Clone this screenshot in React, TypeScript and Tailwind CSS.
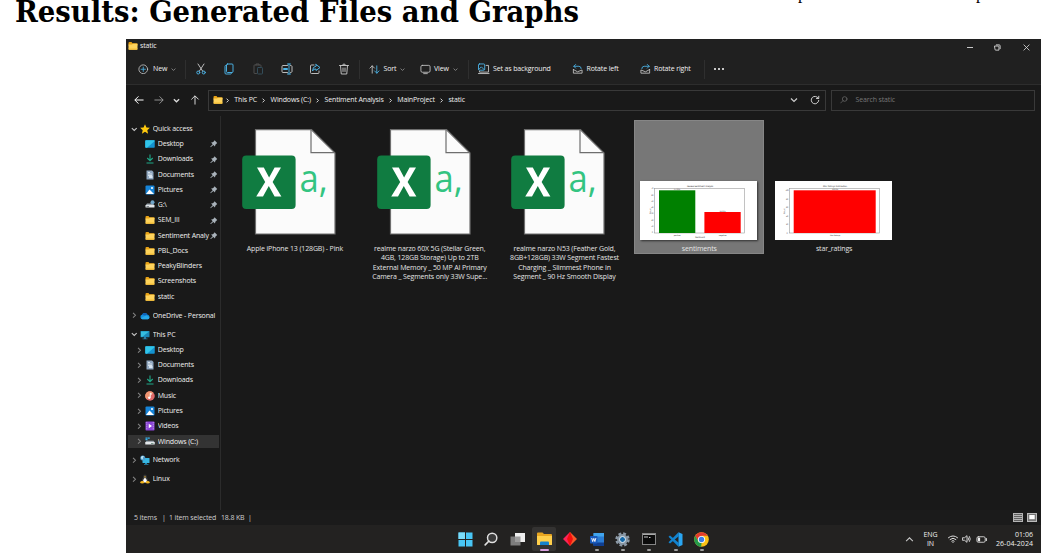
import React from "react";

const B = "#4cb4e8";
const G = "#c4c4c4";

function Ic({ size = 12, children, vb = "0 0 24 24", w }: { size?: number; children: React.ReactNode; vb?: string; w?: number }) {
  return (
    <svg width={w ?? size} height={size} viewBox={vb} fill="none" strokeWidth="1.9" strokeLinecap="round" strokeLinejoin="round" className="block shrink-0">
      {children}
    </svg>
  );
}

function Chev({ dir = "down", size = 6, color = "#a0a0a0", sw = 1.2 }: { dir?: "down" | "right" | "up"; size?: number; color?: string; sw?: number }) {
  const d = dir === "down" ? "M1 2.5 L4 5.5 L7 2.5" : dir === "up" ? "M1 5.5 L4 2.5 L7 5.5" : "M2.5 1 L5.5 4 L2.5 7";
  return (
    <svg width={size} height={size} viewBox="0 0 8 8" fill="none" className="block shrink-0">
      <path d={d} stroke={color} strokeWidth={sw} />
    </svg>
  );
}

function Folder({ size = 10 }: { size?: number }) {
  return (
    <svg width={size} height={size} viewBox="0 0 20 20" className="block shrink-0">
      <path d="M1 4 Q1 2 3 2 H7 L9 4.5 H17 Q19 4.5 19 6 V9 H1Z" fill="#e8a317" />
      <path d="M1 7 H8 L10 5.5 H19 V16 Q19 17.5 17.5 17.5 H2.5 Q1 17.5 1 16Z" fill="#ffd45c" />
      <path d="M1 15 H19 V16 Q19 17.5 17.5 17.5 H2.5 Q1 17.5 1 16Z" fill="#f5bd37" />
    </svg>
  );
}

function SideIcon({ kind }: { kind: string }) {
  if (kind === "folder") return <Folder />;
  return (
    <svg width="10" height="10" viewBox="0 0 20 20" className="block shrink-0">
      {kind === "star" && <path d="M10 .5 L12.9 7 L19.7 7.7 L14.6 12.3 L16.2 19.3 L10 15.6 L3.8 19.3 L5.4 12.3 L.3 7.7 L7.1 7Z" fill="#ffc90e" />}
      {kind === "desktop" && (
        <g>
          <rect x=".5" y="2.5" width="19" height="15" rx="1.5" fill="#1492d0" />
          <path d="M.5 4 Q.5 2.5 2 2.5 H18 Q19.5 2.5 19.5 4 L4 17.5 H2 Q.5 17.5 .5 16Z" fill="#31c4e8" />
        </g>
      )}
      {kind === "downloads" && <path d="M10 1 V13 M4.5 8 L10 13.5 L15.5 8 M3 18 H17" stroke="#1fa888" strokeWidth="2.2" fill="none" />}
      {kind === "documents" && (
        <g>
          <path d="M3 1 H14 L17 4 V19 H3Z" fill="#8fa6be" />
          <path d="M6 5 H10 M6 8 H14 M6 11 H14" stroke="#eef4fa" strokeWidth="1.5" />
          <rect x="8" y="12" width="7" height="4" fill="#d7e3ef" />
        </g>
      )}
      {kind === "pictures" && (
        <g>
          <rect x="1" y="1" width="18" height="18" rx="2" fill="#1684d8" />
          <path d="M2 18 L9 9 L18 18Z" fill="#fff" />
          <circle cx="14" cy="6" r="2" fill="#fff" />
        </g>
      )}
      {kind === "gdrive" && (
        <g>
          <path d="M4 7 H16 L19 11 H1Z" fill="#9aa4ac" />
          <rect x="1" y="10" width="18" height="5" rx="1" fill="#e1e5e8" />
          <circle cx="15" cy="4.5" r="4" fill="#6fa5c8" />
          <rect x="3" y="12" width="5" height="1.3" fill="#4c555c" />
        </g>
      )}
      {kind === "cloud" && (
        <g>
          <path d="M5 16.5 A4.5 4.5 0 0 1 4 7.7 A6 6 0 0 1 14.6 7 A5 5 0 0 1 16 16.5Z" fill="#1490df" />
          <path d="M2 14 L12 9 L19 12 Q19 16.5 15.5 16.5 H5 Q3 16.5 2 14Z" fill="#27a9ea" />
          <path d="M4 7.7 A6 6 0 0 1 14.6 7 L10 9Z" fill="#0f5fb5" />
        </g>
      )}
      {kind === "pc" && (
        <g>
          <rect x="1" y="2" width="18" height="12.5" rx="1" fill="#1987b9" />
          <path d="M2 3 H18 L5 13.5 H2Z" fill="#35bde0" />
          <path d="M8 14 H12 V17 H15 V18.5 H5 V17 H8Z" fill="#2b7ea6" />
        </g>
      )}
      {kind === "music" && (
        <g>
          <circle cx="10" cy="10" r="9.5" fill="#df6a6a" />
          <path d="M10 .5 A9.5 9.5 0 0 0 3 16.5 L17 3.5 A9.5 9.5 0 0 0 10 .5" fill="#ef9572" />
          <path d="M10.5 13.5 V4.5 L14 6.5" stroke="#fff" strokeWidth="1.8" fill="none" />
          <circle cx="8.5" cy="13.5" r="2.4" fill="#fff" />
        </g>
      )}
      {kind === "videos" && (
        <g>
          <rect x="1" y="1" width="18" height="18" rx="1.5" fill="#8a43d6" />
          <path d="M3.5 2.5 V18 M16.5 2.5 V18" stroke="#d9b8f8" strokeWidth="1.6" strokeDasharray="2 2" />
          <path d="M7.5 5.5 L14 10 L7.5 14.5Z" fill="#fff" />
        </g>
      )}
      {kind === "drive" && (
        <g>
          <path d="M3 7.5 H17 L19.5 11 H.5Z" fill="#9aa4ac" />
          <rect x=".5" y="10" width="19" height="5" rx="1" fill="#e4e8eb" />
          <rect x="1" y="1" width="4" height="2.5" fill="#35b3ee" />
          <rect x="5.5" y="1" width="4" height="2.5" fill="#35b3ee" />
          <rect x="1" y="4" width="4" height="2.5" fill="#35b3ee" />
          <rect x="12" y="12" width="5" height="1.3" fill="#3f6b58" />
        </g>
      )}
      {kind === "network" && (
        <g>
          <rect x="5" y="6" width="14" height="10" rx="1" fill="#37b6e2" />
          <path d="M10 16 H14 V18 H17 V19.5 H8 V18 H10Z" fill="#2486ae" />
          <circle cx="5.5" cy="6" r="5" fill="#4b98c9" />
          <path d="M2 4 Q5 1 8 3 L5 6 L7 9 L3 8Z" fill="#c5e9f7" />
        </g>
      )}
      {kind === "linux" && (
        <g>
          <path d="M10 1 Q14 1 13.5 6 Q17 11 16 17 H4 Q3 11 6.5 6 Q6 1 10 1" fill="#3a3a3a" />
          <path d="M10 7 Q14 10 13.5 17 H6.5 Q6 10 10 7" fill="#fff" />
          <path d="M8 5 L10 7.5 L12 5Z" fill="#f3b51e" />
          <ellipse cx="4.5" cy="16.5" rx="3.8" ry="2.4" fill="#f3b51e" />
          <ellipse cx="15.5" cy="16.5" rx="3.8" ry="2.4" fill="#f3b51e" />
        </g>
      )}
    </svg>
  );
}

function Pin() {
  return (
    <svg width="7.5" height="7.5" viewBox="0 0 14 14" className="block shrink-0">
      <path d="M8.5 .5 L13.5 5.5 L12 6.8 L10 9 L9.3 12 L6.2 9.2 L1.2 13.5 L.5 12.8 L5 7.8 L2 4.7 L5.2 4.2 L7.5 2.2Z" fill="#a9b2ba" />
    </svg>
  );
}

type Row = { label: string; icon: string; level?: number; chev?: "down" | "right"; pin?: boolean; sel?: boolean };

function SideRow({ r }: { r: Row }) {
  return (
    <div className={"flex h-[15.27px] w-[94px] shrink-0 items-center " + (r.level ? "pl-[9.5px]" : "pl-[4.5px]")}>
      <div className={"flex h-[13.5px] items-center " + (r.sel ? "-ml-[7.5px] w-[91px] bg-[#333333] pl-[7.5px]" : "w-full")}>
        <div className="w-[9.5px] shrink-0">{r.chev && <Chev dir={r.chev} size={6.5} color={r.chev === "down" ? "#c8c8c8" : "#858585"} sw={1.3} />}</div>
        <SideIcon kind={r.icon} />
        <span className="ml-[2.7px] w-[54px] grow overflow-hidden whitespace-nowrap">{r.label}</span>
        {r.pin && (
          <div className="mr-[2.5px]">
            <Pin />
          </div>
        )}
      </div>
    </div>
  );
}

const groups: Row[][] = [
  [
    { label: "Quick access", icon: "star", chev: "down" },
    { label: "Desktop", icon: "desktop", level: 1, pin: true },
    { label: "Downloads", icon: "downloads", level: 1, pin: true },
    { label: "Documents", icon: "documents", level: 1, pin: true },
    { label: "Pictures", icon: "pictures", level: 1, pin: true },
    { label: "G:\\", icon: "gdrive", level: 1, pin: true },
    { label: "SEM_III", icon: "folder", level: 1, pin: true },
    { label: "Sentiment Analy", icon: "folder", level: 1, pin: true },
    { label: "PBL_Docs", icon: "folder", level: 1 },
    { label: "PeakyBlinders", icon: "folder", level: 1 },
    { label: "Screenshots", icon: "folder", level: 1 },
    { label: "static", icon: "folder", level: 1 },
  ],
  [{ label: "OneDrive - Personal", icon: "cloud", chev: "right" }],
  [
    { label: "This PC", icon: "pc", chev: "down" },
    { label: "Desktop", icon: "desktop", level: 1, chev: "right" },
    { label: "Documents", icon: "documents", level: 1, chev: "right" },
    { label: "Downloads", icon: "downloads", level: 1, chev: "right" },
    { label: "Music", icon: "music", level: 1, chev: "right" },
    { label: "Pictures", icon: "pictures", level: 1, chev: "right" },
    { label: "Videos", icon: "videos", level: 1, chev: "right" },
    { label: "Windows (C:)", icon: "drive", level: 1, chev: "right", sel: true },
  ],
  [{ label: "Network", icon: "network", chev: "right" }],
  [{ label: "Linux", icon: "linux", chev: "right" }],
];

function CsvIcon() {
  return (
    <svg width="94" height="106" viewBox="0 0 94 106" className="block shrink-0">
      <path d="M13.5 .7 H69.5 L93 24 V105 H13.5Z" fill="#fbfbfb" stroke="#6e6e6e" strokeWidth="1.2" />
      <path d="M69 .7 V23.7 H93" fill="none" stroke="#6e6e6e" strokeWidth="1.2" />
      <rect x=".2" y="26.5" width="53.4" height="53.4" rx="4" fill="#107c41" />
      <path d="M15 38.5 H21.8 L27.1 48.6 L32.6 38.5 H39 L30.6 53 L39.4 67.6 H32.6 L26.8 57 L21 67.6 H14.2 L23.2 53Z" fill="#fff" />
      <text x="57.5" y="62.5" fontSize="38" fill="#33c481" fontFamily="'Open Sans','Noto Sans',sans-serif" textLength="28" lengthAdjust="spacingAndGlyphs">
        a,
      </text>
    </svg>
  );
}

function ChartA() {
  return (
    <svg width="117" height="59" viewBox="0 0 117 59" className="block bg-white shadow-[1px_1px_2px_rgba(0,0,0,0.6)]">
      <rect x="14.5" y="7.5" width="90" height="44.5" fill="none" stroke="#999" strokeWidth=".6" />
      <rect x="19" y="9.3" width="36.3" height="42.7" fill="#008000" />
      <rect x="64.4" y="31" width="36.3" height="21" fill="#f00" />
      <g fontFamily="'DejaVu Sans',sans-serif" fill="#333" textAnchor="middle">
        <text x="60" y="6.3" fontSize="2.2" textLength="26">Review Sentiment Analysis</text>
        <text x="37" y="8.8" fontSize="1.8">67.00%</text>
        <text x="82.5" y="30.6" fontSize="1.8">33.00%</text>
        <text x="37" y="54.8" fontSize="2">positive</text>
        <text x="82.5" y="54.8" fontSize="2">negative</text>
        <text x="60" y="57.2" fontSize="2.1">Sentiment</text>
        <text x="10.5" y="30" fontSize="2.1" transform="rotate(-90 10.5 30)">Count</text>
        {[70, 60, 50, 40, 30, 20, 10, 0].map((n, i) => (
          <text key={n} x="12.3" y={8.2 + i * 6.3} fontSize="1.9">{n}</text>
        ))}
      </g>
    </svg>
  );
}

function ChartB() {
  return (
    <svg width="117" height="59" viewBox="0 0 117 59" className="block bg-white">
      <rect x="14.5" y="7.5" width="90" height="44.5" fill="none" stroke="#999" strokeWidth=".6" />
      <rect x="18.7" y="9.3" width="82" height="42.7" fill="#f00" />
      <g fontFamily="'DejaVu Sans',sans-serif" fill="#333" textAnchor="middle">
        <text x="60" y="6.3" fontSize="2.1" textLength="24">Star Ratings Distribution</text>
        <text x="60" y="8.9" fontSize="1.8">100.0%</text>
        <text x="60" y="55.2" fontSize="1.8" textLength="10">Star Ratings</text>
        <text x="10" y="30" fontSize="2.1" transform="rotate(-90 10 30)">Count</text>
        {[100, 80, 60, 40, 20, 0].map((n, i) => (
          <text key={n} x="12" y={10.2 + i * 8.5} fontSize="1.9">{n}</text>
        ))}
      </g>
    </svg>
  );
}

function Tile({ lines, children, sel }: { lines: string[]; children: React.ReactNode; sel?: boolean }) {
  return (
    <div className={"flex w-[129.8px] shrink-0 flex-col items-center " + (sel ? "h-[134px] bg-[#777777] outline outline-1 -outline-offset-1 outline-[#868686]" : "")}>
      <div className="flex h-[120px] w-full items-end justify-center">{children}</div>
      <div className="mt-[3.7px] text-center leading-[9.6px]">
        {lines.map((l) => (
          <div key={l} className="whitespace-nowrap">{l}</div>
        ))}
      </div>
    </div>
  );
}

function TaskIcon({ children, bar, active }: { children: React.ReactNode; bar?: boolean; active?: boolean }) {
  return (
    <div className="flex w-[26.3px] shrink-0 justify-center">
      <div className={"relative flex h-[24px] w-[24px] items-center justify-center rounded-[2px] " + (active ? "bg-[#343332]" : "")}>
        {children}
        {bar && <span className={"absolute bottom-0 h-[2px] rounded-full " + (active ? "w-[9px] bg-[#d9a0e0]" : "w-[4px] bg-[#a0a0a0]")} />}
      </div>
    </div>
  );
}

const Div = () => <div className="h-[19px] w-px shrink-0 bg-[#2f2f2f]" />;

export default function App() {
  return (
    <div className="h-[560px] w-[1048px] overflow-hidden bg-white">
      <div className="flex h-[39px] items-start overflow-hidden text-black">
        <div className="ml-[15px] w-[785px] shrink-0">
          <h1 className="-mt-[8px] w-max origin-left scale-x-[1.002] whitespace-nowrap font-['DejaVu_Serif_Condensed','DejaVu_Serif',serif] text-[30.5px] leading-[38px] font-bold">
            Results: Generated Files and Graphs
          </h1>
        </div>
        <span className="-mt-[15px] -ml-[2px] w-[178px] shrink-0 font-['Liberation_Serif',serif] text-[17px] leading-[18px]">p</span>
        <span className="-mt-[15px] font-['Liberation_Serif',serif] text-[17px] leading-[18px]">p</span>
      </div>

      <div className="ml-[126px] flex h-[514px] w-[915px] flex-col overflow-hidden bg-[#191919] font-['Open_Sans','Noto_Sans',sans-serif] text-[7px] leading-[10px] tracking-[-0.14px] text-[#f0f0f0]">
        <div className="flex h-[15px] shrink-0 items-center bg-[#202020]">
          <div className="ml-[2px] pb-[1px]"><Folder size={10} /></div>
          <span className="ml-[2px] w-[826.5px] pb-[1px]">static</span>
          <div className="flex w-[63px] items-center justify-between pt-[2px]">
            <span className="h-px w-[6px] bg-[#c8c8c8]" />
            <Ic size={7}><path d="M3 7 H14 Q17 7 17 10 V21 H6 Q3 21 3 18Z M8 3 H18 Q21 3 21 7 V16" stroke="#ddd" strokeWidth="3" /></Ic>
            <Ic size={7}><path d="M3 3 L21 21 M21 3 L3 21" stroke="#ddd" strokeWidth="2.8" /></Ic>
          </div>
        </div>

        <div className="flex h-[30px] shrink-0 items-center bg-[#202020]">
          <div className="ml-[12px] w-[15px]">
            <Ic size={10.5}>
              <circle cx="12" cy="12" r="10" stroke={G} />
              <path d="M12 7 V17 M7 12 H17" stroke={B} />
            </Ic>
          </div>
          <span className="w-[17.5px]">New</span>
          <Chev size={5} />
          <div className="w-[9px]" />
          <Div />
          <div className="ml-[1px] flex w-[172px] items-center justify-around">
            <Ic size={12}>
              <path d="M6 2 L15.5 16.5 M18 2 L8.5 16.5" stroke={G} />
              <circle cx="6.5" cy="19" r="3" stroke={B} />
              <circle cx="17.5" cy="19" r="3" stroke={B} />
            </Ic>
            <Ic size={12}>
              <path d="M7 5 H5 Q4 5 4 7 V20 Q4 22 6 22 H15 Q17 22 17 20" stroke={B} />
              <rect x="7" y="2" width="13" height="17" rx="2" stroke={B} />
            </Ic>
            <Ic size={12}>
              <path d="M9 21 H5 Q4 21 4 20 V5 Q4 4 5 4 H17 Q18 4 18 5 V7 M8 4 V2 H14 V4" stroke="#505050" />
              <rect x="11" y="9" width="10" height="13" rx="1.5" stroke="#35505e" />
            </Ic>
            <Ic size={12}>
              <path d="M13 5 H4 Q2 5 2 7 V17 Q2 19 4 19 H13 M19 5 Q22 5 22 7 V17 Q22 19 19 19" stroke={G} />
              <path d="M6 12 H12" stroke={B} strokeWidth="4" />
              <path d="M16 2 V22 M13 2 H19 M13 22 H19" stroke={B} />
            </Ic>
            <Ic size={12}>
              <path d="M10 4 H5 Q3 4 3 6 V19 Q3 21 5 21 H18 Q20 21 20 19 V16" stroke={G} />
              <path d="M14 3 L22 9 L14 15 V12 Q9 11 7 16 Q7 7 14 6Z" stroke={B} />
            </Ic>
            <Ic size={12}>
              <path d="M3 5 H21 M5 5 L6.5 22 H17.5 L19 5 M9 5 Q9 2 12 2 Q15 2 15 5 M10 10 V17 M14 10 V17" stroke={G} />
            </Ic>
          </div>
          <div><Div /></div>
          <div className="ml-[9px] w-[15px]">
            <Ic size={11}>
              <path d="M7 20 V4 M2 9 L7 4 L12 9" stroke={G} />
              <path d="M17 4 V20 M12 15 L17 20 L22 15" stroke={B} />
            </Ic>
          </div>
          <span className="w-[16px]">Sort</span>
          <Chev size={5} />
          <div className="ml-[15px] w-[14.5px]">
            <Ic size={11}>
              <rect x="2" y="3" width="20" height="15" rx="3" stroke={G} />
              <path d="M8 21 H16" stroke={G} />
            </Ic>
          </div>
          <span className="w-[19px]">View</span>
          <Chev size={5} />
          <div className="ml-[10px]"><Div /></div>
          <div className="ml-[9px] w-[15px]">
            <Ic size={11.5}>
              <rect x="1" y="2" width="13" height="13" rx="2" stroke={B} />
              <path d="M2 13 L7 8 L13 14" stroke={B} />
              <path d="M17 5 H22 V19 H3 V17 M1 22 H23" stroke={G} />
            </Ic>
          </div>
          <span className="w-[79px] whitespace-nowrap">Set as background</span>
          <div className="w-[14.5px]">
            <Ic size={11}>
              <path d="M8 1 L4 5 L8 9 M4 5 H15 Q20 5 20 10" stroke={B} />
              <path d="M3 12 V20 H22 V13 L12 17 L3 12" stroke={G} />
            </Ic>
          </div>
          <span className="w-[53px] whitespace-nowrap">Rotate left</span>
          <div className="w-[14.5px]">
            <Ic size={11}>
              <path d="M16 1 L20 5 L16 9 M20 5 H9 Q4 5 4 10" stroke={B} />
              <path d="M21 12 V20 H2 V13 L12 17 L21 12" stroke={G} />
            </Ic>
          </div>
          <span className="w-[49.5px] whitespace-nowrap">Rotate right</span>
          <Div />
          <div className="ml-[9px] flex gap-[2px]">
            <i className="size-[2px] rounded-full bg-white" />
            <i className="size-[2px] rounded-full bg-white" />
            <i className="size-[2px] rounded-full bg-white" />
          </div>
        </div>

        <div className="flex h-[32px] shrink-0 items-center border-t border-[#2d2d2d] pb-[1px]">
          <div className="ml-[8px] flex w-[66px] items-center justify-between">
            <Ic size={10}><path d="M22 12 H3 M10 4 L2 12 L10 20" stroke="#fff" strokeWidth="2.4" /></Ic>
            <Ic size={10}><path d="M2 12 H21 M14 4 L22 12 L14 20" stroke="#aaa" strokeWidth="2" /></Ic>
            <Chev size={7} color="#ddd" sw={1.5} />
            <Ic size={10}><path d="M12 22 V3 M4 10 L12 2 L20 10" stroke="#e8e8e8" strokeWidth="2.2" /></Ic>
          </div>
          <div className="ml-[8px] flex h-[21px] w-[617.5px] items-center border border-[#393939]">
            <div className="ml-[4px] w-[12px]"><Folder size={10} /></div>
            <div className="flex items-center gap-[4.3px] whitespace-nowrap">
              {["This PC", "Windows (C:)", "Sentiment Analysis", "MainProject", "static"].map((t) => (
                <React.Fragment key={t}>
                  <Chev dir="right" size={5} color="#e0e0e0" sw={1.5} />
                  <span>{t}</span>
                </React.Fragment>
              ))}
            </div>
            <div className="mr-[5px] ml-auto flex items-center gap-[12px]">
              <Chev size={8} color="#ccc" sw={1.2} />
              <Ic size={10}><path d="M20 8 A9 9 0 1 0 21 13 M21 3 V8.5 H15.5" stroke="#ddd" strokeWidth="2.2" /></Ic>
            </div>
          </div>
          <div className="ml-[5.5px] flex h-[21px] w-[204px] items-center border border-[#393939] text-[#767676]">
            <div className="ml-[8px] w-[15.5px]">
              <Ic size={8}><circle cx="14" cy="9" r="7" stroke="#777" /><path d="M9 14 L2 21" stroke="#777" /></Ic>
            </div>
            Search static
          </div>
        </div>

        <div className="flex h-[394px] shrink-0">
          <div className="flex w-[95px] shrink-0 flex-col gap-[3.7px] border-r border-[#2b2b2b] pt-[5.2px]">
            {groups.map((g, i) => (
              <div key={i} className="flex flex-col">
                {g.map((r) => (
                  <SideRow key={r.label} r={r} />
                ))}
              </div>
            ))}
          </div>
          <div className="flex items-start gap-[5px] pt-[4px] pl-[9px] text-[#e4e4e4]">
            <Tile lines={["Apple iPhone 13 (128GB) - Pink"]}>
              <div className="mr-[12.4px] mb-[5px]"><CsvIcon /></div>
            </Tile>
            <Tile lines={["realme narzo 60X 5G (Stellar Green,", "4GB, 128GB Storage) Up to 2TB", "External Memory _ 50 MP AI Primary", "Camera _ Segments only 33W Supe..."]}>
              <div className="mr-[12.4px] mb-[5px]"><CsvIcon /></div>
            </Tile>
            <Tile lines={["realme narzo N53 (Feather Gold,", "8GB+128GB) 33W Segment Fastest", "Charging _ Slimmest Phone in", "Segment _ 90 Hz Smooth Display"]}>
              <div className="mr-[12.4px] mb-[5px]"><CsvIcon /></div>
            </Tile>
            <Tile lines={["sentiments"]} sel>
              <div className="mr-[1px]"><ChartA /></div>
            </Tile>
            <Tile lines={["star_ratings"]}>
              <div className="mr-[1px]"><ChartB /></div>
            </Tile>
          </div>
        </div>

        <div className="flex h-[15px] shrink-0 items-center bg-[#1b1b1b] text-[#d0d0d0]">
          <span className="ml-[8px] w-[28px]">5 items</span>
          <span className="w-[7px]">|</span>
          <span className="w-[52px] whitespace-nowrap">1 item selected</span>
          <span className="w-[27px]">18.8 KB</span>
          <span>|</span>
          <div className="mr-[4px] ml-auto flex gap-[4px]">
            <svg width="10" height="9" viewBox="0 0 10 9"><rect width="10" height="9" fill="#b5b5b5" /><path d="M1 1.5H9M1 3.5H9M1 5.5H9M1 7.5H9" stroke="#4a4a4a" strokeWidth=".8" /></svg>
            <svg width="10" height="9" viewBox="0 0 10 9"><rect x=".5" y=".5" width="9" height="8" fill="#777" stroke="#bbb" /><rect x="2.3" y="2" width="5.4" height="4.2" fill="#fff" /></svg>
          </div>
        </div>

        <div className="flex h-[28px] shrink-0 items-center bg-[#232221]">
          <div className="ml-[326px] flex w-[263px]">
            <TaskIcon>
              <svg width="15" height="15" viewBox="0 0 15 15"><path d="M.5 .5H7V7H.5Z M8 .5H14.5V7H8Z M.5 8H7V14.5H.5Z M8 8H14.5V14.5H8Z" fill="#48c6f5" /><path d="M.5 .5H7V7H.5Z" fill="#7addfb" /></svg>
            </TaskIcon>
            <TaskIcon>
              <Ic size={14}><circle cx="14" cy="10" r="8" stroke="#e0e0e0" fill="#3b3b3b" strokeWidth="2.5" /><path d="M8.5 15.5 L2 22" stroke="#e0e0e0" strokeWidth="2.8" /></Ic>
            </TaskIcon>
            <TaskIcon>
              <svg width="15" height="14" viewBox="0 0 15 14"><rect x="5" y="1" width="10" height="9" fill="#eeeeee" /><rect x=".5" y="4.5" width="10" height="9" fill="#8d8d8d" fillOpacity=".85" /></svg>
            </TaskIcon>
            <TaskIcon bar active>
              <svg width="15" height="14" viewBox="0 0 15 14"><path d="M0 1.5 Q0 .5 1 .5H5.5L7 2H14Q15 2 15 3V6H0Z" fill="#e7a520" /><path d="M0 4H15V12.5Q15 13 14.5 13H.5Q0 13 0 12.5Z" fill="#ffcf4b" /><path d="M3 10.5Q3 9.5 4 9.5H11Q12 9.5 12 10.5V13H3Z" fill="#1682cc" /></svg>
            </TaskIcon>
            <TaskIcon>
              <svg width="14" height="14" viewBox="0 0 14 14"><path d="M7 0L0 7L7 14Z" fill="#fb2459" /><path d="M7 0L14 7L7 14Z" fill="#f5582a" /><path d="M7 0L10 7L7 14L4 7Z" fill="#f20d0d" /></svg>
            </TaskIcon>
            <TaskIcon bar>
              <svg width="14" height="13" viewBox="0 0 14 13"><rect x="3.5" width="10.5" height="13" rx="1" fill="#2b7cd3" /><rect x="3.5" width="10.5" height="3.5" fill="#41a5ee" /><rect x="3.5" y="9.5" width="10.5" height="3.5" fill="#103f91" /><rect y="3" width="7.5" height="7.5" rx=".7" fill="#185abd" /><path d="M1.7 5L2.7 8.6L3.8 5.4L4.9 8.6L5.9 5" stroke="#fff" strokeWidth=".9" fill="none" /></svg>
            </TaskIcon>
            <TaskIcon bar>
              <svg width="15" height="15" viewBox="0 0 15 15"><circle cx="7.5" cy="7.5" r="5.9" fill="none" stroke="#8d9aa7" strokeWidth="2.6" strokeDasharray="2.7 1.93" /><circle cx="7.5" cy="7.5" r="5.4" fill="#8795a2" /><circle cx="7.5" cy="7.5" r="3" fill="#1468a8" stroke="#e8eef3" strokeWidth="1" /></svg>
            </TaskIcon>
            <TaskIcon bar>
              <svg width="14" height="12" viewBox="0 0 14 12"><rect x=".5" y=".5" width="13" height="11" fill="#0b0b0b" stroke="#858585" /><path d="M1 1.5H13" stroke="#aaa" strokeWidth="1" /><path d="M2 4H6M7 4.5H8.5" stroke="#ddd" strokeWidth=".9" /></svg>
            </TaskIcon>
            <TaskIcon bar>
              <svg width="15" height="15" viewBox="0 0 15 15"><path d="M10.5 .3L14.5 2V13L10.5 14.7Z" fill="#2aa6f2" /><path d="M10.5 .3L11 4L2 11.5L.5 10.2Z M.5 4.8L2 3.5L11 11L10.5 14.7Z" fill="#1283cf" /></svg>
            </TaskIcon>
            <TaskIcon bar>
              <svg width="15" height="15" viewBox="0 0 15 15"><circle cx="7.5" cy="7.5" r="7.3" fill="#fbc116" /><path d="M1.2 3.8A7.3 7.3 0 0 1 13.8 3.8H7.5L4.3 9.4Z" fill="#e33b2e" /><path d="M1.2 3.8L4.4 9.4L7.5 11L7.2 14.8A7.3 7.3 0 0 1 1.2 3.8" fill="#249a4b" /><circle cx="7.5" cy="7.5" r="3.6" fill="#fff" /><circle cx="7.5" cy="7.5" r="2.7" fill="#3b7de8" /></svg>
            </TaskIcon>
          </div>
          <div className="ml-[190px]"><Chev dir="up" size={9} color="#ccc" sw={0.9} /></div>
          <div className="ml-[6.5px] w-[20px] text-center leading-[9.3px] tracking-normal">
            <div>ENG</div>
            <div>IN</div>
          </div>
          <div className="ml-[7px] flex items-center gap-[4px]">
            <Ic size={10}><path d="M1 9 Q12 0 23 9 M5 13 Q12 7 19 13 M9 17 Q12 14 15 17 M12 20 V20.5" stroke="#ddd" strokeWidth="2.4" /></Ic>
            <Ic size={10}><path d="M2 9 H6 L12 4 V20 L6 15 H2Z M15 9 Q17 12 15 15 M18 6 Q22 12 18 18" stroke="#ddd" strokeWidth="2.2" /></Ic>
            <Ic size={11}><rect x="2" y="6" width="18" height="12" rx="3" stroke="#ddd" /><rect x="4" y="8" width="5" height="8" fill="#eee" /><path d="M22.5 10 V14" stroke="#ddd" strokeWidth="2.6" /></Ic>
          </div>
          <div className="mr-[8px] ml-auto text-right leading-[9.3px] tracking-[0.05px]">
            <div>01:06</div>
            <div>26-04-2024</div>
          </div>
        </div>
      </div>
    </div>
  );
}
